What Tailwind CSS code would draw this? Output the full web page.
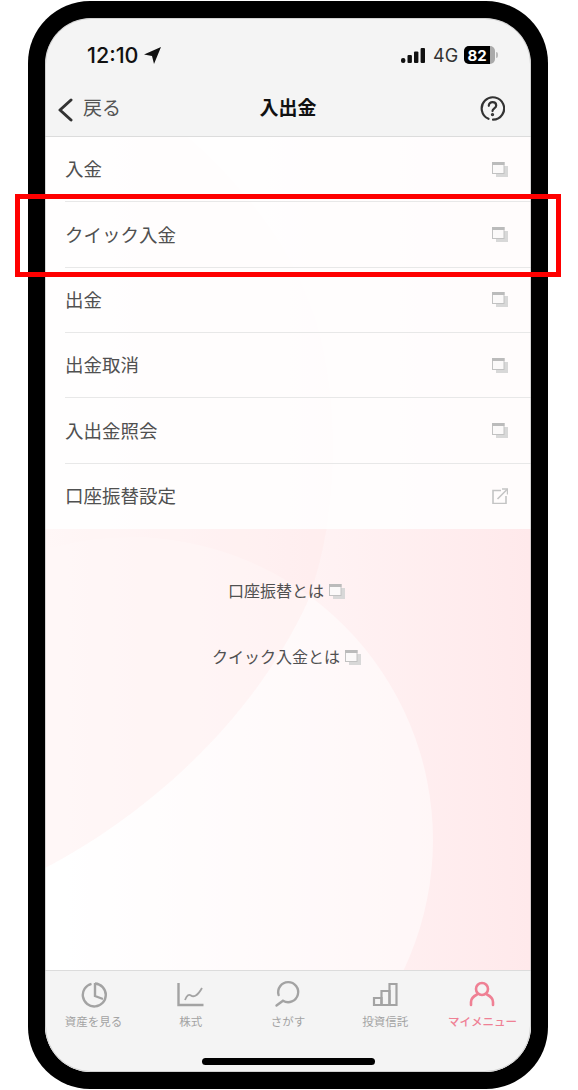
<!DOCTYPE html>
<html lang="ja">
<head>
  <meta charset="UTF-8">
  <meta name="viewport" content="width=device-width, initial-scale=1.0">
  <title>入出金</title>
  <script src="https://cdn.jsdelivr.net/npm/@tailwindcss/browser@4"></script>
</head>
<body class="bg-white w-[578px] h-[1090px] overflow-hidden relative font-['Inter','Noto_Sans_CJK_JP',sans-serif]">
  <!-- phone frame -->
  <div class="ml-[28px] mt-[1px] w-[520px] h-[1088px] bg-black rounded-[62px] p-[17px]">
    <div class="relative w-[486px] h-[1054px] rounded-[46px] overflow-hidden bg-[#f4f4f4] flex flex-col">
      <!-- status bar -->
      <div class="h-[65px] flex items-start justify-between pl-[42px] pr-[33px] pt-[23px]">
        <div class="flex items-center gap-[5px] text-[21.5px] leading-[28px] font-medium text-[#111]">
          12:10
          <svg width="17" height="17" viewBox="0 0 17 17"><path d="M0 7.5 17 0 10 17 8 9Z" fill="#111"/></svg>
        </div>
        <div class="flex items-center h-[28px]">
          <svg width="24" height="15" viewBox="0 0 24 15" fill="#111"><rect x="0" y="10" width="4.4" height="5" rx="2"/><rect x="6.5" y="7" width="4.4" height="8" rx="1"/><rect x="13" y="3.5" width="4.4" height="11.5" rx="1"/><rect x="19.6" y="0" width="4.4" height="15" rx="1"/></svg>
          <span class="ml-[8px] w-[31px] text-[18px] text-[#333]">4G</span>
          <div class="w-[31px] h-[18px] rounded-[5px] bg-[#aaa] overflow-hidden">
            <div class="w-[26px] h-[18px] bg-black flex items-center justify-center text-[15px] font-bold text-white leading-none">82</div>
          </div>
          <div class="ml-[1px] w-[2px] h-[6px] rounded-r-full bg-[#bbb]"></div>
        </div>
      </div>
      <!-- nav bar -->
      <div class="h-[54px] border-b border-[#dcdcdc] flex items-center relative px-[12px]">
        <svg width="16" height="24" viewBox="0 0 16 24" fill="none" stroke="#333" stroke-width="3" stroke-linecap="round" stroke-linejoin="round"><path d="M14 2 3 12l11 10"/></svg>
        <span class="ml-[10px] text-[19px] text-[#555]">戻る</span>
        <span class="absolute left-0 right-0 text-center text-[19px] font-bold text-[#111]">入出金</span>
        <svg class="absolute right-[26px] top-[13px]" width="25" height="25" viewBox="0 0 25 25" fill="none" stroke="#333" stroke-width="2.2" stroke-linecap="round"><path d="M8.5 22.8A11.2 11.2 0 1 1 13 23.7"/><path d="M8.8 9.8c0-2.3 1.7-3.6 3.7-3.6s3.7 1.3 3.7 3.3c0 2.9-3.7 2.8-3.7 5.6"/><circle cx="12.5" cy="18.6" r=".6" fill="#333"/></svg>
      </div>
      <!-- content -->
      <div class="relative flex-1 bg-white overflow-hidden">
        <div class="absolute inset-0 bg-gradient-to-r from-white to-[#ffe9eb]"></div>
        <svg class="absolute inset-0" width="486" height="834" viewBox="0 0 486 834">
          <circle cx="85" cy="703" r="303" fill="#fff" opacity=".5"/>
          <path d="M0 731C80 690 200 600 262 466 290 390 295 300 280 220 265 130 200 50 143 0H0Z" fill="#ffe3e6" opacity=".3"/>
        </svg>
        <div class="relative">
          <div class="bg-white/85 text-[18.5px] text-[#505050]">
            <div class="h-[65.33px] ml-[20px] pr-[23px] border-b border-[#e8e8e8] flex items-center justify-between"><span class="pt-[2px]">入金</span>
              <svg width="16" height="15" viewBox="0 0 16 15"><rect x="4" y="4" width="12" height="11" fill="#d8d8d8"/><rect x=".5" y=".5" width="11.5" height="11" fill="#fbf9f9" stroke="#c2c2c2"/><rect x="0" y="0" width="12.5" height="3" fill="#bbb"/></svg>
            </div>
            <div class="h-[65.33px] ml-[20px] pr-[23px] border-b border-[#e8e8e8] flex items-center justify-between"><span class="pt-[2px]">クイック入金</span>
              <svg width="16" height="15" viewBox="0 0 16 15"><rect x="4" y="4" width="12" height="11" fill="#d8d8d8"/><rect x=".5" y=".5" width="11.5" height="11" fill="#fbf9f9" stroke="#c2c2c2"/><rect x="0" y="0" width="12.5" height="3" fill="#bbb"/></svg>
            </div>
            <div class="h-[65.33px] ml-[20px] pr-[23px] border-b border-[#e8e8e8] flex items-center justify-between"><span class="pt-[2px]">出金</span>
              <svg width="16" height="15" viewBox="0 0 16 15"><rect x="4" y="4" width="12" height="11" fill="#d8d8d8"/><rect x=".5" y=".5" width="11.5" height="11" fill="#fbf9f9" stroke="#c2c2c2"/><rect x="0" y="0" width="12.5" height="3" fill="#bbb"/></svg>
            </div>
            <div class="h-[65.33px] ml-[20px] pr-[23px] border-b border-[#e8e8e8] flex items-center justify-between"><span class="pt-[2px]">出金取消</span>
              <svg width="16" height="15" viewBox="0 0 16 15"><rect x="4" y="4" width="12" height="11" fill="#d8d8d8"/><rect x=".5" y=".5" width="11.5" height="11" fill="#fbf9f9" stroke="#c2c2c2"/><rect x="0" y="0" width="12.5" height="3" fill="#bbb"/></svg>
            </div>
            <div class="h-[65.33px] ml-[20px] pr-[23px] border-b border-[#e8e8e8] flex items-center justify-between"><span class="pt-[2px]">入出金照会</span>
              <svg width="16" height="15" viewBox="0 0 16 15"><rect x="4" y="4" width="12" height="11" fill="#d8d8d8"/><rect x=".5" y=".5" width="11.5" height="11" fill="#fbf9f9" stroke="#c2c2c2"/><rect x="0" y="0" width="12.5" height="3" fill="#bbb"/></svg>
            </div>
            <div class="h-[65.33px] ml-[20px] pr-[23px] flex items-center justify-between"><span class="pt-[2px]">口座振替設定</span>
              <svg width="16" height="16" viewBox="0 0 16 16" fill="none" stroke="#c4c4c4" stroke-width="1.6"><path d="M9 2.5H1v13h13V8"/><path d="M5.5 11 15 1.5"/><path d="M10 1h5.5v5.5" stroke-width="1.4"/></svg>
            </div>
          </div>
          <div class="flex flex-col items-center pt-[53px] pr-[3px] gap-[47.5px] text-[16px] leading-[18.5px] text-[#505050]">
            <div class="flex items-center gap-[5px]">口座振替とは
              <svg width="16" height="15" viewBox="0 0 16 15"><rect x="4" y="4" width="12" height="11" fill="#d8d8d8"/><rect x=".5" y=".5" width="11.5" height="11" fill="#fbf9f9" stroke="#c2c2c2"/><rect x="0" y="0" width="12.5" height="3" fill="#bbb"/></svg>
            </div>
            <div class="flex items-center gap-[5px]">クイック入金とは
              <svg width="16" height="15" viewBox="0 0 16 15"><rect x="4" y="4" width="12" height="11" fill="#d8d8d8"/><rect x=".5" y=".5" width="11.5" height="11" fill="#fbf9f9" stroke="#c2c2c2"/><rect x="0" y="0" width="12.5" height="3" fill="#bbb"/></svg>
            </div>
          </div>
        </div>
      </div>
      <!-- tab bar -->
      <div class="h-[102px] border-t border-[#dcdcdc] bg-[#f4f4f4] grid grid-cols-5 pt-[9px] text-[11.5px] text-[#a3a3a3] text-center">
        <div class="flex flex-col items-center gap-[6px]">
          <svg width="28" height="28" viewBox="0 0 28 28" fill="none" stroke="#a3a3a3" stroke-width="2.4"><path d="M11.5 3.8A11.5 11.5 0 1 0 25.8 15 11.5 11.5 0 0 0 15 3.5"/><path d="M15 3v13l8 3"/></svg>
          <span>資産を見る</span>
        </div>
        <div class="flex flex-col items-center gap-[6px]">
          <svg width="28" height="28" viewBox="0 0 28 28" fill="none" stroke="#a3a3a3" stroke-width="1.8"><path d="M1.5 3v22h25" stroke-width="2.4"/><path d="M8 20C10 15 12 14 14 15.5S20 17 25 8"/></svg>
          <span>株式</span>
        </div>
        <div class="flex flex-col items-center gap-[6px]">
          <svg width="28" height="28" viewBox="0 0 28 28" fill="none" stroke="#a3a3a3" stroke-width="2.4" stroke-linecap="round"><path d="M4.6 15A10 10 0 1 1 9 20.7L2.5 25.5"/></svg>
          <span>さがす</span>
        </div>
        <div class="flex flex-col items-center gap-[6px]">
          <svg width="28" height="28" viewBox="0 0 28 28" fill="none" stroke="#a3a3a3" stroke-width="2.2"><path d="M3 25v-7h7.5v7Z"/><path d="M10.5 25V11h8v14"/><path d="M18.5 25V4h7v21H3"/></svg>
          <span>投資信託</span>
        </div>
        <div class="flex flex-col items-center gap-[6px] text-[#ef8094]">
          <svg width="28" height="28" viewBox="0 0 28 28" fill="none" stroke="#ef8094" stroke-width="2.6" stroke-linecap="round"><circle cx="14" cy="9" r="6"/><path d="M3 25v-3c0-4 3-6 6-7.5M25 25v-3c0-4-3-6-6-7.5"/></svg>
          <span class="font-medium">マイメニュー</span>
        </div>
      </div>
      <!-- home indicator -->
      <div class="absolute left-[157px] bottom-[7px] w-[173px] h-[7px] rounded-full bg-black"></div>
      <!-- thin grey edge of the screen -->
      <div class="absolute inset-0 rounded-[46px] border border-[#b0b0b0]/50"></div>
    </div>
  </div>
  <!-- red highlight over the row -->
  <div class="absolute left-[15px] top-[194px] w-[546px] h-[83px] border-[5px] border-[#ff0000]"></div>
</body>
</html>
